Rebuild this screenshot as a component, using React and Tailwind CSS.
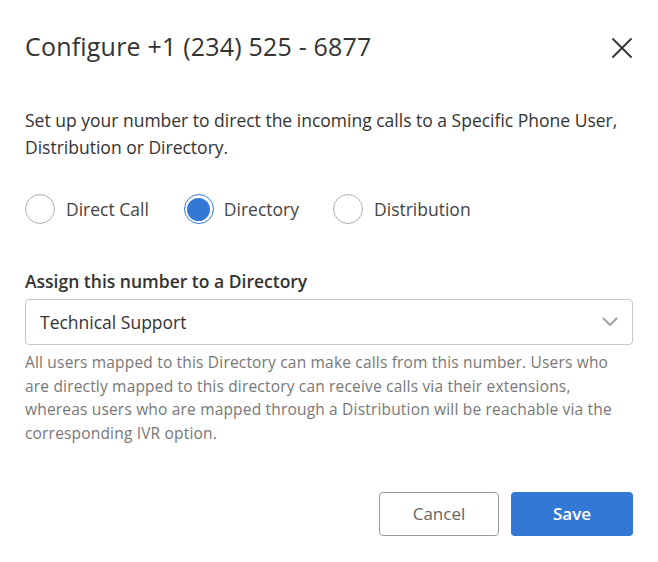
export default function App() {
  const font = { fontFamily: '"Open Sans", "Noto Sans", sans-serif' };
  return (
    <div className="w-[658px] h-[562px] bg-white px-[25px] text-[#333333]" style={font}>
      <div className="flex items-start justify-between pt-[30px]">
        <h1 className="text-[25px] leading-[32px] font-normal text-[#333333] tracking-[0.2px]">
          Configure +1 (234) 525 - 6877
        </h1>
        <button className="mt-[8px] mr-[1px] w-[20px] h-[20px] flex items-center justify-center">
          <svg width="20" height="20" viewBox="0 0 20 20" fill="none">
            <path d="M1 1 L19 19 M19 1 L1 19" stroke="#333333" strokeWidth="1.8" strokeLinecap="round" />
          </svg>
        </button>
      </div>

      <p className="mt-[45px] text-[17.5px] leading-[27px] text-[#333333]">
        Set up your number to direct the incoming calls to a Specific Phone User,
        <br />
        Distribution or Directory.
      </p>

      <div className="mt-[33px] flex items-center h-[30px]">
        <label className="flex items-center">
          <span className="w-[30px] h-[30px] rounded-full border border-[#b0b0b0] bg-white" />
          <span className="ml-[11px] text-[17.5px] text-[#444444]">Direct Call</span>
        </label>
        <label className="flex items-center ml-[35px]">
          <span className="w-[30px] h-[30px] rounded-full border border-[#3478d6] bg-white flex items-center justify-center">
            <span className="w-[23px] h-[23px] rounded-full bg-[#3478d6]" />
          </span>
          <span className="ml-[10px] text-[17.5px] text-[#444444]">Directory</span>
        </label>
        <label className="flex items-center ml-[34px]">
          <span className="w-[30px] h-[30px] rounded-full border border-[#b0b0b0] bg-white" />
          <span className="ml-[11px] text-[17.5px] text-[#444444]">Distribution</span>
        </label>
      </div>

      <div className="mt-[45px] text-[17.5px] leading-[24px] font-semibold text-[#333333]">
        Assign this number to a Directory
      </div>

      <div className="mt-[6px] h-[46px] w-[608px] rounded-[4px] border border-[#c8c8c8] flex items-center justify-between pl-[14px] pr-[14px]">
        <span className="text-[17.5px] text-[#333333]">Technical Support</span>
        <svg width="16" height="10" viewBox="0 0 16 10" fill="none">
          <path d="M1.5 1.5 L8 8 L14.5 1.5" stroke="#a0a0a0" strokeWidth="2" strokeLinecap="round" strokeLinejoin="round" />
        </svg>
      </div>

      <p className="mt-[6px] text-[15.5px] leading-[23.5px] text-[#777777] tracking-[0.18px]">
        All users mapped to this Directory can make calls from this number. Users who
        <br />
        are directly mapped to this directory can receive calls via their extensions,
        <br />
        whereas users who are mapped through a Distribution will be reachable via the
        <br />
        corresponding IVR option.
      </p>

      <div className="mt-[47px] flex justify-end gap-[12px]">
        <button className="w-[120px] h-[44px] rounded-[4px] border border-[#9a9a9a] bg-white text-[17px] text-[#666666]">
          Cancel
        </button>
        <button className="w-[122px] h-[44px] rounded-[4px] bg-[#3478d6] text-[17px] font-semibold text-white">
          Save
        </button>
      </div>
    </div>
  );
}
